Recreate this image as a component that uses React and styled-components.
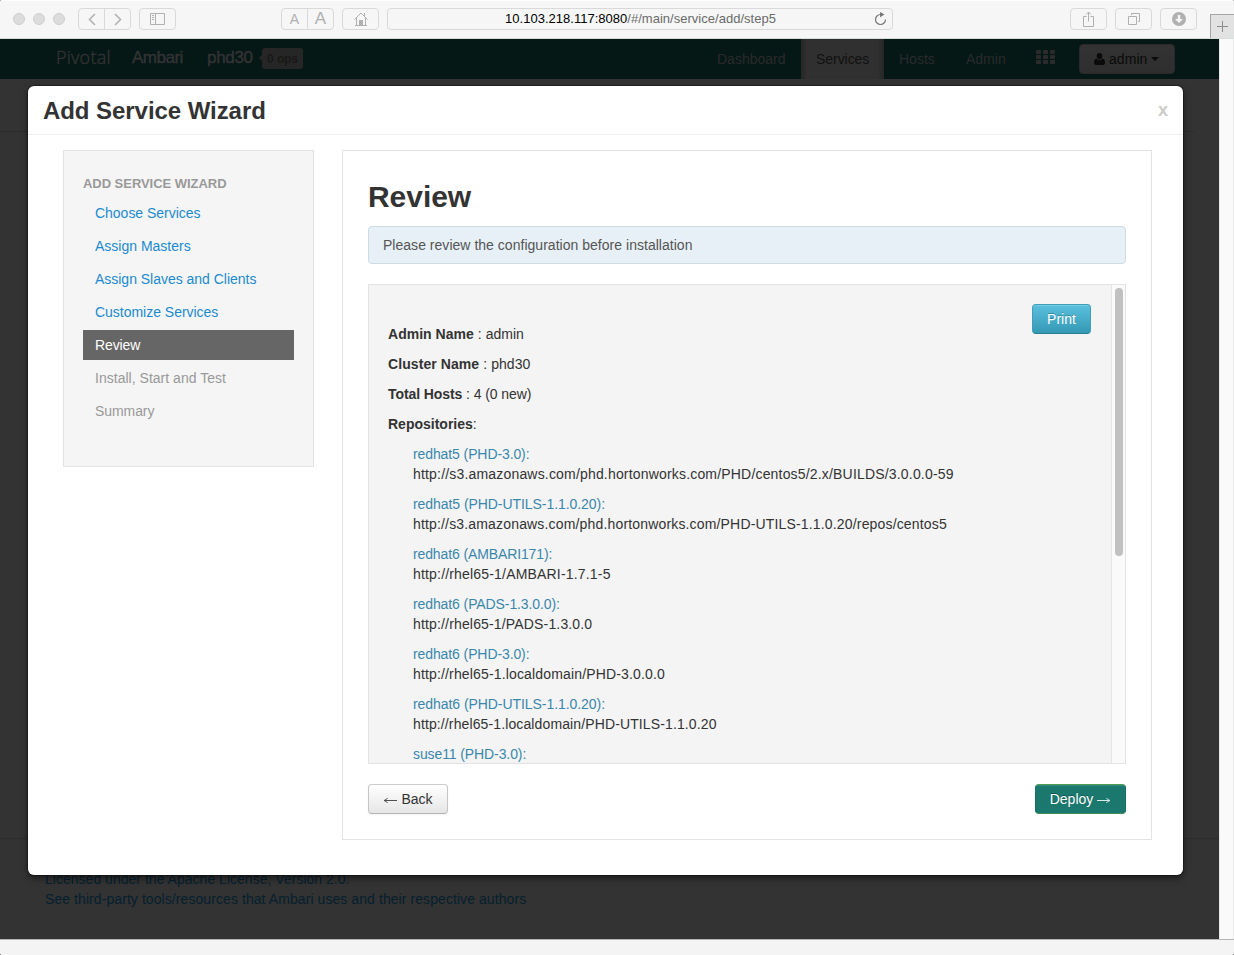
import React from "react";
import styled, { createGlobalStyle, css } from "styled-components";

const Global = createGlobalStyle`
  *, *::before, *::after { box-sizing: border-box; }
  body { margin: 0; background: #000; font: 14px/20px "Liberation Sans", Arial, sans-serif; color: #333; }
  h2, h3, ul, p { margin: 0; padding: 0; }
  svg { display: block; }
`;

const Window = styled.div`
  width: 1234px; height: 955px; display: flex; flex-direction: column;
  background: #f5f5f5; border-radius: 2px; overflow: hidden; position: relative;
`;

/* Browser chrome */
const Chrome = styled.header`
  height: 39px; flex: none; display: flex; align-items: center; padding: 0 0 1px 13px;
  background: #f6f6f6; border-top: 1px solid #fdfdfd; border-bottom: 1px solid #d5dedb;
`;
const Lights = styled.div`display: flex; gap: 8px; width: 65px;`;
const Light = styled.i`width: 12px; height: 12px; border-radius: 50%; background: #dcdcdc; border: 1px solid #cfcfcf;`;
const Group = styled.div`
  display: flex; height: 22px; border: 1px solid #d9d9d9; border-radius: 4px; margin-left: ${p => p.$gap || 0}px;
`;
const Tool = styled.span`
  width: ${p => p.$w || 35}px; display: flex; align-items: center; justify-content: center;
  color: #b0b0b0; font-size: ${p => p.$size || 14}px;
  & + & { border-left: 1px solid #d9d9d9; }
`;
const Address = styled.div`
  width: 506px; height: 22px; border: 1px solid #d9d9d9; border-radius: 4px; margin-left: 8px;
  display: flex; align-items: center; justify-content: space-between; padding: 0 5px 0 117px;
  font-size: 13px; color: #6b6b6b; letter-spacing: 0.02px;
  b { font-weight: 400; color: #000; }
`;
const NewTab = styled.div`
  width: 24px; height: 24px; margin-left: auto; align-self: flex-end; margin-bottom: -1px;
  background: #e2e2e2; border: 1px solid #a6a6a6; border-width: 1px 0 0 1px;
  display: flex; align-items: center; justify-content: center;
`;

/* Page behind the dialog */
const Viewport = styled.div`flex: 1; display: flex; min-height: 0;`;
const Page = styled.div`width: 1219px; background: #333; display: flex; flex-direction: column;`;
const Gutter = styled.div`width: 15px; background: #fafafa; border: 1px solid #e8e8e8; border-width: 0 1px;`;
const Nav = styled.nav`
  height: 40px; flex: none; background: #051816; display: flex; align-items: center; padding-left: 56px; color: #333;
`;
const Logo = styled.span`
  font: 300 18px/20px "Open Sans", sans-serif; width: 76px; letter-spacing: 0.25px; -webkit-text-stroke: 0.4px #333; margin-top: -4px;
`;
const Brand = styled.span`
  font-size: 17px; width: ${p => p.$w}px; -webkit-text-stroke: 0.4px #333; margin-top: -3px; letter-spacing: ${p => p.$ls || 0}px;
`;
const Ops = styled.span`
  position: relative; width: 41px; height: 21px; border-radius: 3px; background: #262626; color: #181818;
  font: bold 12px/22px "Liberation Sans", sans-serif; text-align: center; letter-spacing: -0.1px; margin-top: -1px;
  &::before { content: ""; position: absolute; left: -3px; top: 7px; border: 3px solid transparent; border-left: 0; border-right-color: #262626; }
`;
const Links = styled.div`margin-left: auto; height: 40px; display: flex; align-items: center; color: #2a2a2a;`;
const NavLink = styled.a`
  height: 40px; line-height: 41px; padding-left: 15px; width: ${p => p.$w}px; letter-spacing: ${p => p.$ls || 0}px;
  ${p => p.$active && css`background: linear-gradient(90deg, #262626, #303030 8%, #303030 92%, #262626); color: #111;`}
`;
const Grid = styled.div`
  display: grid; grid-template-columns: repeat(3, 5px); grid-auto-rows: 4px; gap: 1px 2px; width: 43px; margin-top: -4px;
  i { background: #2b2b2b; border-radius: 1px; }
`;
const UserButton = styled.div`
  width: 96px; height: 30px; margin-right: 44px; border-radius: 4px; border: 1px solid #292929;
  background: linear-gradient(#333, #2e2e2e); color: #0a0a0a; display: flex; align-items: center; padding-left: 14px;
  letter-spacing: 0.05px; gap: 4px;
`;
const Rule = styled.div`margin-top: 52px; width: 1194px; height: 1px; background: #2c2c2c;`;
const Footer = styled.footer`
  margin-top: auto; height: 101px; border-top: 1px solid #2c2c2c; padding: 30px 0 0 45px; color: #061f2e;
`;
const FooterLink = styled.div`letter-spacing: ${p => p.$ls}px;`;
const Status = styled.div`height: 16px; flex: none; background: #f4f4f4; border-top: 1px solid #b5b5b5;`;

/* Dialog */
const Dialog = styled.section`
  position: absolute; left: 28px; top: 86px; width: 1155px; height: 789px; background: #fff; border-radius: 6px;
  box-shadow: 0 3px 7px rgba(0,0,0,.5), 0 0 0 1px rgba(0,0,0,.3);
`;
const DialogHead = styled.div`
  height: 49px; border-bottom: 1px solid #eee; padding: 2px 15px 0; display: flex; align-items: center; justify-content: space-between;
  h3 { font-size: 24px; line-height: 30px; letter-spacing: -0.06px; }
`;
const Close = styled.span`font: bold 18px/20px "Liberation Sans", sans-serif; color: #ccc; margin-top: -3px;`;
const DialogBody = styled.div`display: flex; gap: 28px; padding: 15px 0 0 35px; align-items: flex-start;`;
const Well = styled.aside`width: 251px; height: 317px; background: #f5f5f5; border: 1px solid #e3e3e3; padding: 22px 19px;`;
const WellTitle = styled.div`font-weight: 700; font-size: 13px; color: #999; height: 25px; line-height: 21px; letter-spacing: -0.04px;`;
const Step = styled.li`
  list-style: none; height: 30px; line-height: 30px; padding-left: 12px; margin-bottom: 3px; letter-spacing: ${p => p.$ls}px;
  color: ${p => ({ done: "#1b8bd0", now: "#fff", later: "#999" })[p.$state]};
  background: ${p => (p.$state === "now" ? "#666" : "none")};
`;
const Content = styled.main`
  width: 810px; height: 690px; border: 1px solid #e3e3e3; padding: 25px; display: flex; flex-direction: column;
  h2 { font-size: 30px; line-height: 42px; height: 50px; letter-spacing: -0.05px; }
`;
const Alert = styled.div`
  height: 38px; flex: none; background: #e7f0f7; border: 1px solid #cddbe2; border-radius: 4px; padding: 0 14px; line-height: 36px; color: #555;
  letter-spacing: 0.025px;
`;
const Panel = styled.div`
  margin-top: 20px; height: 480px; flex: none; background: #f4f4f4; border: 1px solid #e3e3e3; display: flex; overflow: hidden;
`;
const Review = styled.div`flex: 1; padding: 39px 0 0 19px;`;
const Fact = styled.p`margin-bottom: 10px; letter-spacing: ${p => p.$ls || 0}px;`;
const Repo = styled.div`margin: 0 0 10px 25px; white-space: nowrap; letter-spacing: ${p => p.$ls}px;`;
const RepoName = styled.span`display: block; color: #3a87ad; letter-spacing: ${p => p.$ls}px;`;
const Side = styled.div`padding: 19px 20px 0 0;`;
const Track = styled.div`width: 14px; background: #fafafa; border-left: 1px solid #e6e6e6; padding: 3px 0 0 3px;`;
const Thumb = styled.div`width: 8px; height: 268px; border-radius: 4px; background: #c1c1c1;`;
const Actions = styled.div`display: flex; justify-content: space-between; margin-top: 20px;`;
const variants = {
  info: css`color: #fff; background: linear-gradient(#5bc0de, #3499b4); border-color: #3c9fba #3c9fba #2a7f96; text-shadow: 0 -1px 0 rgba(0,0,0,.25); box-shadow: inset 0 1px 0 rgba(255,255,255,.2);`,
  plain: css`color: #333; background: linear-gradient(#fff, #e6e6e6); border-color: #ccc #c5c5c5 #b3b3b3; box-shadow: inset 0 1px 0 rgba(255,255,255,.2), 0 1px 2px rgba(0,0,0,.05);`,
  deploy: css`color: #fff; background: #1b786f; border-color: #4a9c50 #1b6f66 #3f8a55; text-shadow: 0 -1px 0 rgba(0,0,0,.25); box-shadow: inset 0 1px 0 rgba(255,255,255,.12);`,
};
const Button = styled.button`
  width: ${p => p.$w}px; height: 30px; padding: 0; border: 1px solid; border-radius: 4px; font: 14px/20px "Liberation Sans", sans-serif;
  display: flex; align-items: center; justify-content: center; gap: 4px; letter-spacing: 0;
  svg { margin-top: 2px; opacity: .85; }
  ${p => variants[p.$kind]}
`;

const Icon = ({ w, h, children, sw = 1 }) => (
  <svg width={w} height={h} viewBox={`0 0 ${w} ${h}`} fill="none" stroke="currentColor" strokeWidth={sw}>{children}</svg>
);
const Arrow = ({ right }) => (
  <Icon w={14} h={8}>
    {right ? <path d="M0 4.500H13M9.500 2Q10.500 4 13 4.500Q10.500 5 9.500 7" /> : <path d="M14 4.500H1M4.500 2Q3.500 4 1 4.500Q3.500 5 4.500 7" />}
  </Icon>
);

const steps = [
  ["Choose Services", "done", -0.02], ["Assign Masters", "done", 0], ["Assign Slaves and Clients", "done", -0.02],
  ["Customize Services", "done", -0.02], ["Review", "now", -0.1], ["Install, Start and Test", "later", 0.02], ["Summary", "later", -0.08],
];
const facts = [
  ["Admin Name", " : admin", 0.03], ["Cluster Name", " : phd30", 0.08], ["Total Hosts", " : 4 (0 new)", -0.08], ["Repositories", ":", 0],
];
const repos = [
  ["redhat5 (PHD-3.0):", -0.1, "http://s3.amazonaws.com/phd.hortonworks.com/PHD/centos5/2.x/BUILDS/3.0.0.0-59", 0.18],
  ["redhat5 (PHD-UTILS-1.1.0.20):", -0.06, "http://s3.amazonaws.com/phd.hortonworks.com/PHD-UTILS-1.1.0.20/repos/centos5", 0.165],
  ["redhat6 (AMBARI171):", -0.12, "http://rhel65-1/AMBARI-1.7.1-5", 0.18],
  ["redhat6 (PADS-1.3.0.0):", -0.1, "http://rhel65-1/PADS-1.3.0.0", 0.16],
  ["redhat6 (PHD-3.0):", -0.1, "http://rhel65-1.localdomain/PHD-3.0.0.0", 0.155],
  ["redhat6 (PHD-UTILS-1.1.0.20):", -0.06, "http://rhel65-1.localdomain/PHD-UTILS-1.1.0.20", 0.12],
  ["suse11 (PHD-3.0):", -0.1, "", 0],
];

export default function App() {
  return (
    <>
      <Global />
      <Window>
        <Chrome>
          <Lights><Light /><Light /><Light /></Lights>
          <Group>
            <Tool $w={25}><Icon w={8} h={13} sw={1.5}><path d="M7 1L1.500 6.500L7 12" /></Icon></Tool>
            <Tool $w={26}><Icon w={8} h={13} sw={1.5}><path d="M1 1L6.500 6.500L1 12" /></Icon></Tool>
          </Group>
          <Group $gap={8}>
            <Tool><Icon w={15} h={12}><path d="M.5 .5H14.5V11.5H.5ZM5.5 .5V11.5M2 2.5H4M2 4.5H4M2 6.5H4" /></Icon></Tool>
          </Group>
          <Group $gap={105}>
            <Tool $w={25} $size={14}>A</Tool>
            <Tool $w={26} $size={17}>A</Tool>
          </Group>
          <Group $gap={8}>
            <Tool>
              <Icon w={14} h={14}><path d="M.5 7.5L7 1L13.5 7.5M2.5 6V13.5M11.5 6V13.5M1 13.5H13M10.5 1V4" /><path d="M5 8H9V13H5Z" fill="currentColor" stroke="none" /></Icon>
            </Tool>
          </Group>
          <Address>
            <span><b>10.103.218.117:8080</b>/#/main/service/add/step5</span>
            <Icon w={13} h={14}><path d="M6.5 2.5A5 5 0 1 0 11.5 7.5" stroke="#777" strokeWidth="1.2" /><path d="M6 0L10.5 2.6L6 5.2Z" fill="#777" stroke="none" /></Icon>
          </Address>
          <Group $gap={177}>
            <Tool><Icon w={11} h={16}><path d="M3.5 5.5H.5V15.5H10.5V5.5H7.5M5.5 10.5V1M3 3.5L5.5 1L8 3.5" /></Icon></Tool>
          </Group>
          <Group $gap={8}>
            <Tool><Icon w={12} h={12}><path d="M.5 3.5H8.5V11.5H.5ZM3.5 2V.5H11.5V8.5H10" /></Icon></Tool>
          </Group>
          <Group $gap={8}>
            <Tool><Icon w={14} h={14}><circle cx="7" cy="7" r="7" fill="currentColor" stroke="none" /><path d="M5.8 3H8.2V7H11L7 11L3 7H5.8Z" fill="#f6f6f6" stroke="none" /></Icon></Tool>
          </Group>
          <NewTab><Icon w={11} h={11}><path d="M5.5 0V11M0 5.5H11" stroke="#8c8c8c" /></Icon></NewTab>
        </Chrome>
        <Viewport>
          <Page>
            <Nav>
              <Logo>Pivotal</Logo>
              <Brand $w={75} $ls={-0.5}>Ambari</Brand>
              <Brand $w={55} $ls={-0.3}>phd30</Brand>
              <Ops>0 ops</Ops>
              <Links>
                <NavLink $w={99}>Dashboard</NavLink>
                <NavLink $w={83} $ls={-0.05} $active>Services</NavLink>
                <NavLink $w={67}>Hosts</NavLink>
                <NavLink $w={85}>Admin</NavLink>
                <Grid>{Array.from({ length: 9 }, (_, i) => <i key={i} />)}</Grid>
                <UserButton>
                  <svg width="11" height="12" viewBox="0 0 11 12" fill="#0a0a0a"><path d="M5.5 0C7.3 0 8.3 1.2 8.3 3C8.3 5 7 6.4 5.5 6.4S2.7 5 2.7 3C2.7 1.2 3.7 0 5.5 0ZM2.5 5.6C3.8 7.8 7.2 7.8 8.5 5.6C10.4 6 11 7.6 11 9.8C11 11.3 10.2 12 9 12H2C.8 12 0 11.3 0 9.8C0 7.6 .6 6 2.5 5.6Z" /></svg>
                  <span>admin</span>
                  <svg width="8" height="4" viewBox="0 0 8 4" fill="#0a0a0a"><path d="M0 0H8L4 4Z" /></svg>
                </UserButton>
              </Links>
            </Nav>
            <Rule />
            <Footer>
              <FooterLink $ls={0.02}>Licensed under the Apache License, Version 2.0.</FooterLink>
              <FooterLink $ls={0.075}>See third-party tools/resources that Ambari uses and their respective authors</FooterLink>
            </Footer>
          </Page>
          <Gutter />
        </Viewport>
        <Status />
        <Dialog>
          <DialogHead><h3>Add Service Wizard</h3><Close>x</Close></DialogHead>
          <DialogBody>
            <Well>
              <WellTitle>ADD SERVICE WIZARD</WellTitle>
              <ul>{steps.map(([name, state, ls]) => <Step key={name} $state={state} $ls={ls}>{name}</Step>)}</ul>
            </Well>
            <Content>
              <h2>Review</h2>
              <Alert>Please review the configuration before installation</Alert>
              <Panel>
                <Review>
                  {facts.map(([k, v, ls]) => <Fact key={k} $ls={ls}><b>{k}</b>{v}</Fact>)}
                  {repos.map(([k, kls, v, ls]) => <Repo key={k} $ls={ls}><RepoName $ls={kls}>{k}</RepoName>{v}</Repo>)}
                </Review>
                <Side><Button $kind="info" $w={59}>Print</Button></Side>
                <Track><Thumb /></Track>
              </Panel>
              <Actions>
                <Button $kind="plain" $w={80}><Arrow />Back</Button>
                <Button $kind="deploy" $w={91}>Deploy<Arrow right /></Button>
              </Actions>
            </Content>
          </DialogBody>
        </Dialog>
      </Window>
    </>
  );
}
